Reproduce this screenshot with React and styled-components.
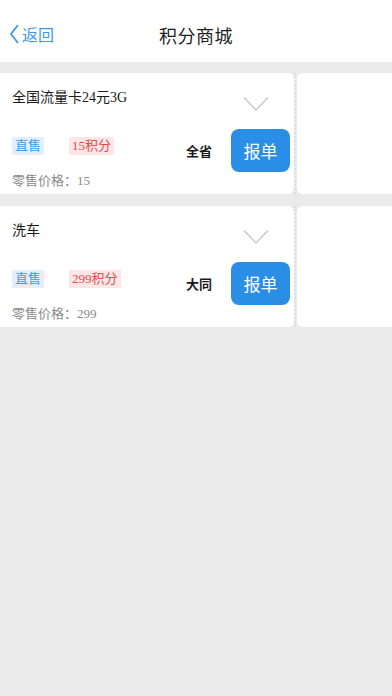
import React from 'react'
import styled, { createGlobalStyle } from 'styled-components'

const GlobalStyle = createGlobalStyle`
  html, body {
    margin: 0;
    padding: 0;
    background: #ebebeb;
    font-family: "Noto Sans CJK SC", "Noto Sans", sans-serif;
  }
  #root {
    min-height: 100vh;
  }
`

const Page = styled.div`
  min-height: 100vh;
  background: #ebebeb;
`

const Header = styled.div`
  height: 62px;
  background: #ffffff;
  display: flex;
  align-items: center;
  justify-content: center;
  position: relative;
  padding-top: 8px;
  box-sizing: border-box;
`

const Back = styled.div`
  position: absolute;
  left: 9px;
  top: 22px;
  display: flex;
  align-items: center;
  gap: 2px;
  color: #3b9ae9;
  font-size: 16px;
  line-height: 24px;
`

const Title = styled.div`
  font-size: 18px;
  color: #1e1e1e;
  letter-spacing: 0.5px;
`

const List = styled.div`
  padding-top: 11px;
  display: flex;
  flex-direction: column;
  gap: 12px;
`

const Card = styled.div`
  display: flex;
  height: 121px;
`

const Main = styled.div`
  width: 294px;
  background: #ffffff;
  border-radius: 0 6px 6px 0;
  display: flex;
  padding: 0 4px 0 12px;
  box-sizing: border-box;
`

const Side = styled.div`
  flex: 1;
  margin-left: 3px;
  background: #ffffff;
  border-radius: 6px 0 0 6px;
  position: relative;

  &::before {
    content: '';
    position: absolute;
    left: -3px;
    top: 0;
    bottom: 0;
    border-left: 2px dotted #d9dfeb;
  }
`

const Info = styled.div`
  flex: 1;
  display: flex;
  flex-direction: column;
  padding-top: 15px;
`

const Name = styled.div`
  font-family: "Liberation Serif", "Noto Sans CJK SC", serif;
  font-size: 14px;
  line-height: 20px;
  color: #1a1a1a;
`

const Tags = styled.div`
  margin-top: 29px;
  display: flex;
  gap: 25px;
`

const Tag = styled.span`
  font-family: "Liberation Serif", "Noto Sans CJK SC", serif;
  font-size: 13px;
  line-height: 18px;
  height: 18px;
  padding: 0 3px;
  color: ${p => p.$color};
  background: ${p => p.$bg};
`

const Price = styled.div`
  margin-top: 17px;
  font-family: "Liberation Serif", "Noto Sans CJK SC", serif;
  font-size: 13px;
  line-height: 18px;
  color: #8a8a8a;
`

const Action = styled.div`
  display: flex;
  align-items: flex-end;
  padding-bottom: 22px;
  gap: 19px;
`

const Area = styled.div`
  font-size: 13px;
  font-weight: 600;
  color: #1a1a1a;
  line-height: 43px;
`

const ButtonCol = styled.div`
  display: flex;
  flex-direction: column;
  align-items: center;
`

const Chevron = styled.svg`
  margin-right: 10px;
  margin-bottom: 17px;
`

const OrderButton = styled.button`
  width: 59px;
  height: 43px;
  border: none;
  border-radius: 8px;
  background: #2a8ee6;
  color: #ffffff;
  font-family: "Noto Sans CJK SC", sans-serif;
  font-size: 17px;
  padding: 0;
  cursor: pointer;
`

const products = [
  { name: '全国流量卡24元3G', points: 15, area: '全省', price: 15 },
  { name: '洗车', points: 299, area: '大同', price: 299 },
]

const App = () => {
  return (
    <Page>
      <GlobalStyle />
      <Header>
        <Back>
          <svg width="11" height="22" viewBox="0 0 11 22">
            <path d="M9 2 L2 11 L9 20" fill="none" stroke="#3b9ae9" strokeWidth="1.8" />
          </svg>
          返回
        </Back>
        <Title>积分商城</Title>
      </Header>
      <List>
        {products.map(p => (
          <Card key={p.name}>
            <Main>
              <Info>
                <Name>{p.name}</Name>
                <Tags>
                  <Tag $color="#3b9ae9" $bg="#e3f0fc">直售</Tag>
                  <Tag $color="#e84a4a" $bg="#fde6e8">{p.points}积分</Tag>
                </Tags>
                <Price>零售价格：{p.price}</Price>
              </Info>
              <Action>
                <Area>{p.area}</Area>
                <ButtonCol>
                  <Chevron width="26" height="16" viewBox="0 0 26 16">
                    <path d="M1 1.5 L13 14 L25 1.5" fill="none" stroke="#c8c8c8" strokeWidth="1.5" />
                  </Chevron>
                  <OrderButton>报单</OrderButton>
                </ButtonCol>
              </Action>
            </Main>
            <Side />
          </Card>
        ))}
      </List>
    </Page>
  )
}

export default App
